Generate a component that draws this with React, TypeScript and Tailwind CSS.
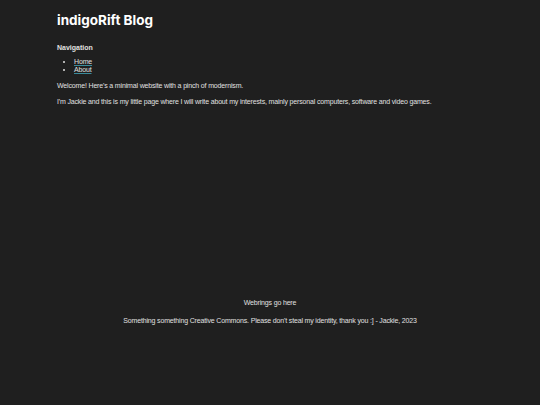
export default function App() {
  return (
    <div className="min-h-[405px] bg-[#1f1f1f] text-[#e0e0e0] font-['Liberation_Sans','Noto_Sans',sans-serif] flex flex-col">
      <main className="px-[57px] pt-[12px]">
        <h1 className="text-[13.5px] font-bold leading-[16px] text-white font-['Inter','Noto_Sans',sans-serif]">indigoRift Blog</h1>

        <h2 className="mt-[15px] text-[7px] font-bold leading-[9px]">Navigation</h2>
        <ul className="mt-[6px] list-disc pl-[17px] text-[7px] leading-[8px] tracking-[-0.16px]">
          <li>
            <a href="#" className="underline decoration-[#3a8a9a]">Home</a>
          </li>
          <li>
            <a href="#" className="underline decoration-[#3a8a9a]">About</a>
          </li>
        </ul>

        <p className="mt-[7px] text-[7px] leading-[9px] tracking-[-0.16px]">Welcome! Here's a minimal website with a pinch of modernism.</p>
        <p className="mt-[7px] text-[7px] leading-[9px] tracking-[-0.16px]">
          I'm Jackie and this is my little page where I will write about my interests, mainly personal computers, software and video games.
        </p>
      </main>

      <footer className="mt-[192px] flex flex-col items-center text-[7px] leading-[9px] tracking-[-0.16px]">
        <p>Webrings go here</p>
        <p className="mt-[9px]">Something something Creative Commons. Please don't steal my identity, thank you :] - Jackie, 2023</p>
      </footer>
    </div>
  );
}
